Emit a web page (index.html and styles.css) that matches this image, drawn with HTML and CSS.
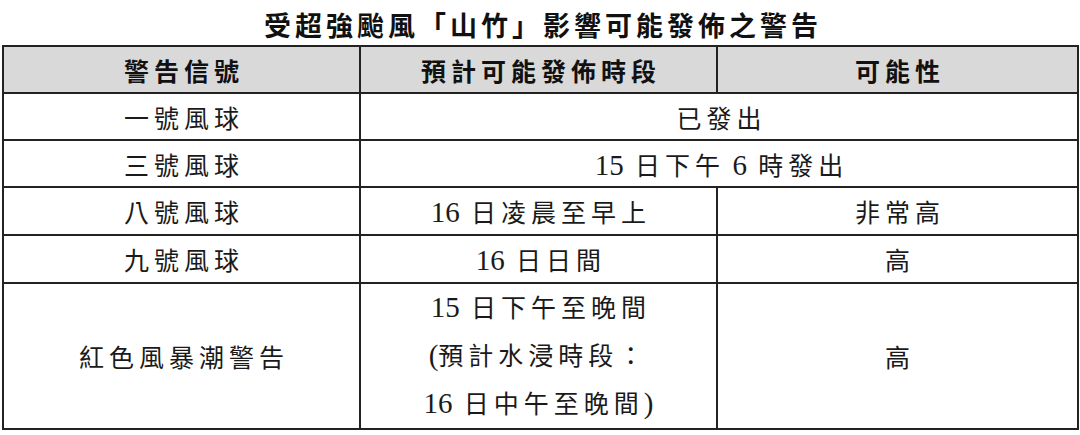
FILE: index.html
```html
<!DOCTYPE html>
<html lang="zh-Hant">
<head>
<meta charset="utf-8">
<link rel="stylesheet" href="styles.css">
</head>
<body>
<div class="page">
  <h1 class="title">受超強颱風「山竹」影響可能發佈之警告</h1>
  <table class="warn">
    <colgroup>
      <col class="c1"><col class="c2"><col class="c3">
    </colgroup>
    <thead>
      <tr class="head">
        <th>警告信號</th>
        <th>預計可能發佈時段</th>
        <th>可能性</th>
      </tr>
    </thead>
    <tbody>
      <tr class="row">
        <td>一號風球</td>
        <td colspan="2">已發出</td>
      </tr>
      <tr class="row">
        <td>三號風球</td>
        <td colspan="2"><span class="num">15</span> 日下午<span class="num"> 6</span> 時發出</td>
      </tr>
      <tr class="row">
        <td>八號風球</td>
        <td><span class="num">16</span> 日凌晨至早上</td>
        <td>非常高</td>
      </tr>
      <tr class="row">
        <td>九號風球</td>
        <td><span class="num">16</span> 日日間</td>
        <td>高</td>
      </tr>
      <tr class="tall">
        <td>紅色風暴潮警告</td>
        <td class="multi"><span class="num">15</span> 日下午至晚間<br><span class="num">(</span>預計水浸時段：<br><span class="num">16</span> 日中午至晚間<span class="num">)</span></td>
        <td>高</td>
      </tr>
    </tbody>
  </table>
</div>
</body>
</html>
```

FILE: styles.css
```css
html, body {
  margin: 0;
  padding: 0;
  background: #ffffff;
}

.page {
  width: 1080px;
  height: 435px;
  padding: 0 0 0 2px;
  box-sizing: border-box;
  font-family: "Liberation Serif", "Noto Sans CJK TC", serif;
  color: #1a1a1a;
}

.title {
  margin: 0;
  height: 45px;
  line-height: 50px;
  text-align: center;
  font-family: "Noto Sans CJK TC", sans-serif;
  font-size: 27px;
  font-weight: 600;
  letter-spacing: 4px;
  text-indent: 4px;
  color: #111;
}

.warn {
  width: 1075px;
  border-collapse: collapse;
  table-layout: fixed;
  border: 2px solid #222;
}

.c1 { width: 357px; }
.c2 { width: 357px; }
.c3 { width: 361px; }

.warn th,
.warn td {
  border: 2px solid #222;
  text-align: center;
  vertical-align: middle;
  padding: 0;
  letter-spacing: 5px;
  text-indent: 5px;
}

.warn th {
  background: #d9d9d9;
  font-family: "Noto Sans CJK TC", sans-serif;
  font-weight: 600;
  font-size: 25px;
  letter-spacing: 5px;
  text-indent: 5px;
  color: #111;
}

.warn td {
  font-weight: 400;
  font-size: 25px;
  color: #1a1a1a;
}

.head { height: 47px; }
.row { height: 47px; }
.row:nth-child(3), .row:nth-child(4) { height: 48px; }
.tall { height: 140px; }

.num {
  font-family: "Liberation Serif", serif;
  font-size: 29px;
  letter-spacing: 0;
}

.multi {
  line-height: 46px;
  padding-top: 6px;
}
```
